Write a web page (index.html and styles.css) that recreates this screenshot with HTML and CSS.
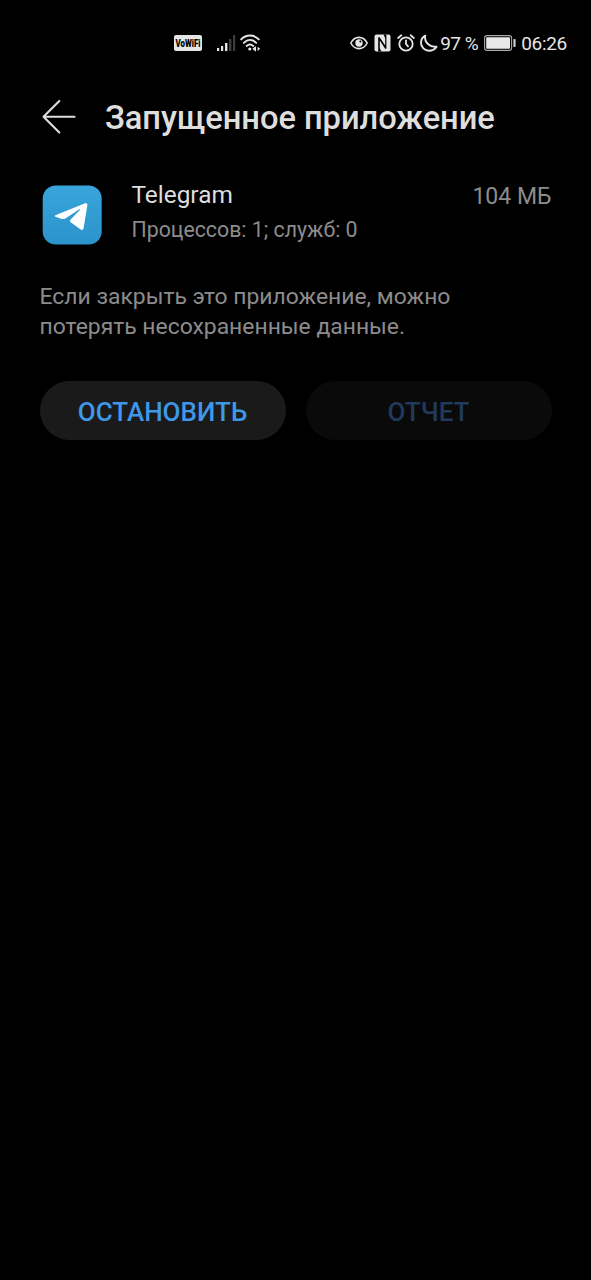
FILE: index.html
```html
<!DOCTYPE html>
<html lang="ru">
<head>
<meta charset="utf-8">
<title>Запущенное приложение</title>
<link rel="stylesheet" href="styles.css">
</head>
<body>
<header class="status">
  <div class="status-left">
    <span class="vowifi"><svg class="vowifi-label" width="28" height="16" viewBox="0 0 28 16"><text class="vowifi-text" x="1.5" y="11.8" textLength="25" lengthAdjust="spacingAndGlyphs">VoWiFi</text></svg></span>
    <svg class="signal" width="19" height="17" viewBox="0 0 19 17" fill="#e6e6e6"><path d="M0 13h2.2v3H0zM4 11h2.2v5H4zM8 8h2.4v8H8z"/><path fill="#3c3c3c" d="M12 4h2.4v12H12zM16 0h2.2v16H16z"/></svg>
    <svg class="wifi" width="22" height="18" viewBox="0 0 22 18" fill="none" stroke="#e6e6e6" stroke-width="1.9" stroke-linecap="round"><path d="M1.2 5.4C6.2.2 13.8.2 18.8 5.4M3.8 8.8C7.6 4.9 12.4 4.9 16.2 8.8M6.7 11.9c2.4-2 4.2-2 6.6 0"/><circle cx="9.8" cy="15" r="1.6" fill="#e6e6e6" stroke="none"/><path fill="#e6e6e6" stroke="none" d="M12.4 14.8l2.6-2.1v4.2zM20.2 14.8l-2.6-2.1v4.2zM15 12.4h1v4.9h-1z"/></svg>
  </div>
  <div class="status-right">
    <svg class="eye" width="18" height="14" viewBox="0 0 18 14" fill="none" stroke="#e6e6e6" stroke-width="1.6"><path d="M.8 7C4.7-.5 13.3-.5 17.2 7 13.3 14.5 4.7 14.5.8 7z"/><circle cx="9" cy="7" r="3.7" fill="#e6e6e6" stroke="none"/><circle cx="10.4" cy="5.6" r="1" fill="#000" stroke="none"/></svg>
    <svg class="nfc" width="17" height="18" viewBox="0 0 17 18"><rect x=".5" y=".5" width="16" height="17" rx="2" fill="#e6e6e6"/><path d="M4.2 3.2L5.6 3.2 11.2 11.6V4.2L9.6.5h2.8v14.3H11.2L5.8 6.6v7.6l1.6 3.3H4.2z"/></svg>
    <svg class="alarm" width="18" height="18" viewBox="0 0 18 18" fill="none" stroke="#e6e6e6" stroke-width="1.8" stroke-linecap="round"><circle cx="9" cy="10" r="6.7"/><path d="M1.2 4L4.3 1.3M16.8 4l-3.1-2.7M9 6.5V10l2 2.3"/></svg>
    <svg class="moon" width="18" height="18" viewBox="0 0 18 18" fill="none" stroke="#e6e6e6" stroke-width="1.9" stroke-linejoin="round"><path d="M5.2 1.6C2.6 3 1 5.6 1 8.8c0 4.5 3.6 7.9 8 7.9 3.1 0 6-1.6 7.6-4C10 13.6 4.1 8.4 5.2 1.6z"/></svg>
    <span class="percent">97 %</span>
    <svg class="battery" width="32" height="16" viewBox="0 0 32 16"><rect x=".6" y=".6" width="27" height="14.8" rx="2.4" fill="none" stroke="#aaa" stroke-width="1.1"/><rect x="2.2" y="2.2" width="23.8" height="11.6" rx=".8" fill="#e8e8e8"/><rect x="29.4" y="4" width="2.2" height="8" rx=".7" fill="#d0d0d0"/></svg>
    <span class="clock">06:26</span>
  </div>
</header>
<main class="page">
  <div class="titlebar">
    <svg class="back" width="34" height="36" viewBox="0 0 34 36" fill="none" stroke="#dedede" stroke-width="2.1" stroke-linecap="round" stroke-linejoin="round"><path d="M17.3 2L1.5 17.8 17.3 33.6M1.5 17.8h31"/></svg>
    <h1 class="title">Запущенное приложение</h1>
  </div>
  <section class="app">
    <svg class="app-icon" width="60" height="60" viewBox="0 0 60 60"><defs><linearGradient id="sky" x2="0" y2="1"><stop stop-color="#38a5db"/><stop offset="1" stop-color="#2b93cb"/></linearGradient></defs><rect x=".7" y=".5" width="59" height="59" rx="13" fill="url(#sky)"/><path fill="#fff" d="M13.4 30.2L43.2 18.3q2.4-.7 2.2 1.8l-3.8 23.1q-.6 2.6-2.9 1.2L28.6 37.2q-1.5-1.3 0-2.8l9.3-9.5q.4-1.2-1-.5L23.3 33.4q-1.6 1-3.4.5L13.4 31.8q-1.5-.7 0-1.6z"/></svg>
    <div class="app-text">
      <div class="app-name">Telegram</div>
      <div class="app-detail">Процессов: 1; служб: 0</div>
    </div>
    <div class="memory">104 МБ</div>
  </section>
  <p class="warning">Если закрыть это приложение, можно<br>потерять несохраненные данные.</p>
  <div class="actions">
    <button class="button">ОСТАНОВИТЬ</button>
    <button class="button button-off" disabled>ОТЧЕТ</button>
  </div>
</main>
</body>
</html>
```
FILE: styles.css
```css
* { box-sizing: border-box; }
body {
  margin: 0;
  min-height: 1280px;
  background: #000;
  color: #dedede;
  font-family: Roboto, "Noto Sans", sans-serif;
}
svg { display: block; flex: none; }
.status {
  display: flex;
  justify-content: space-between;
  height: 86px;
  padding: 0 24px 0 174px;
}
.status-left, .status-right { display: flex; align-items: center; }
.vowifi {
  width: 28px;
  height: 16px;
  border-radius: 2px;
  background: #e6e6e6;
}
.vowifi-label { overflow: visible; }
.vowifi-text { font: 900 10.5px Roboto, sans-serif; fill: #000; }
.signal { margin-left: 15px; }
.wifi { margin-left: 4px; }
.nfc { margin-left: 6px; }
.alarm { margin-left: 6px; }
.moon { margin-left: 5px; }
.percent, .clock { font-size: 19px; line-height: 24px; white-space: nowrap; color: #e6e6e6; }
.percent { margin: 1px 0 0 2px; letter-spacing: -.5px; }
.battery { margin-left: 6px; }
.clock { margin: 1px 0 0 5px; letter-spacing: -.3px; }
.page { padding: 0 39.5px; }
.titlebar { display: flex; align-items: center; height: 62px; padding-left: 2.5px; }
.title { margin: 2px 0 0 29px; font-size: 32.7px; line-height: 40px; font-weight: 500; white-space: nowrap; letter-spacing: -.05px; }
.app { display: flex; padding: 37px 0 0 2.5px; }
.app-text { flex: 1; margin-left: 29.5px; }
.app-name { margin-top: -4px; font-size: 24.4px; line-height: 28px; }
.app-detail { margin-top: 7px; font-size: 21.3px; line-height: 28px; color: #8c8c8c; }
.memory { margin-top: -2px; font-size: 23px; line-height: 28px; color: #8c8c8c; }
.warning { margin: 37px 0 0; font-size: 22.9px; line-height: 30px; color: #8c8c8c; white-space: nowrap; }
.actions { display: flex; gap: 20px; margin-top: 39px; }
.button {
  flex: 1;
  height: 59px;
  padding: 3px 0 0;
  border: 0;
  border-radius: 30px;
  background: #1a1a1a;
  color: #3f97e8;
  font: 500 26px Roboto, sans-serif;
}
.button-off { background: #0a0a0a; color: #1f3a5a; }
```
